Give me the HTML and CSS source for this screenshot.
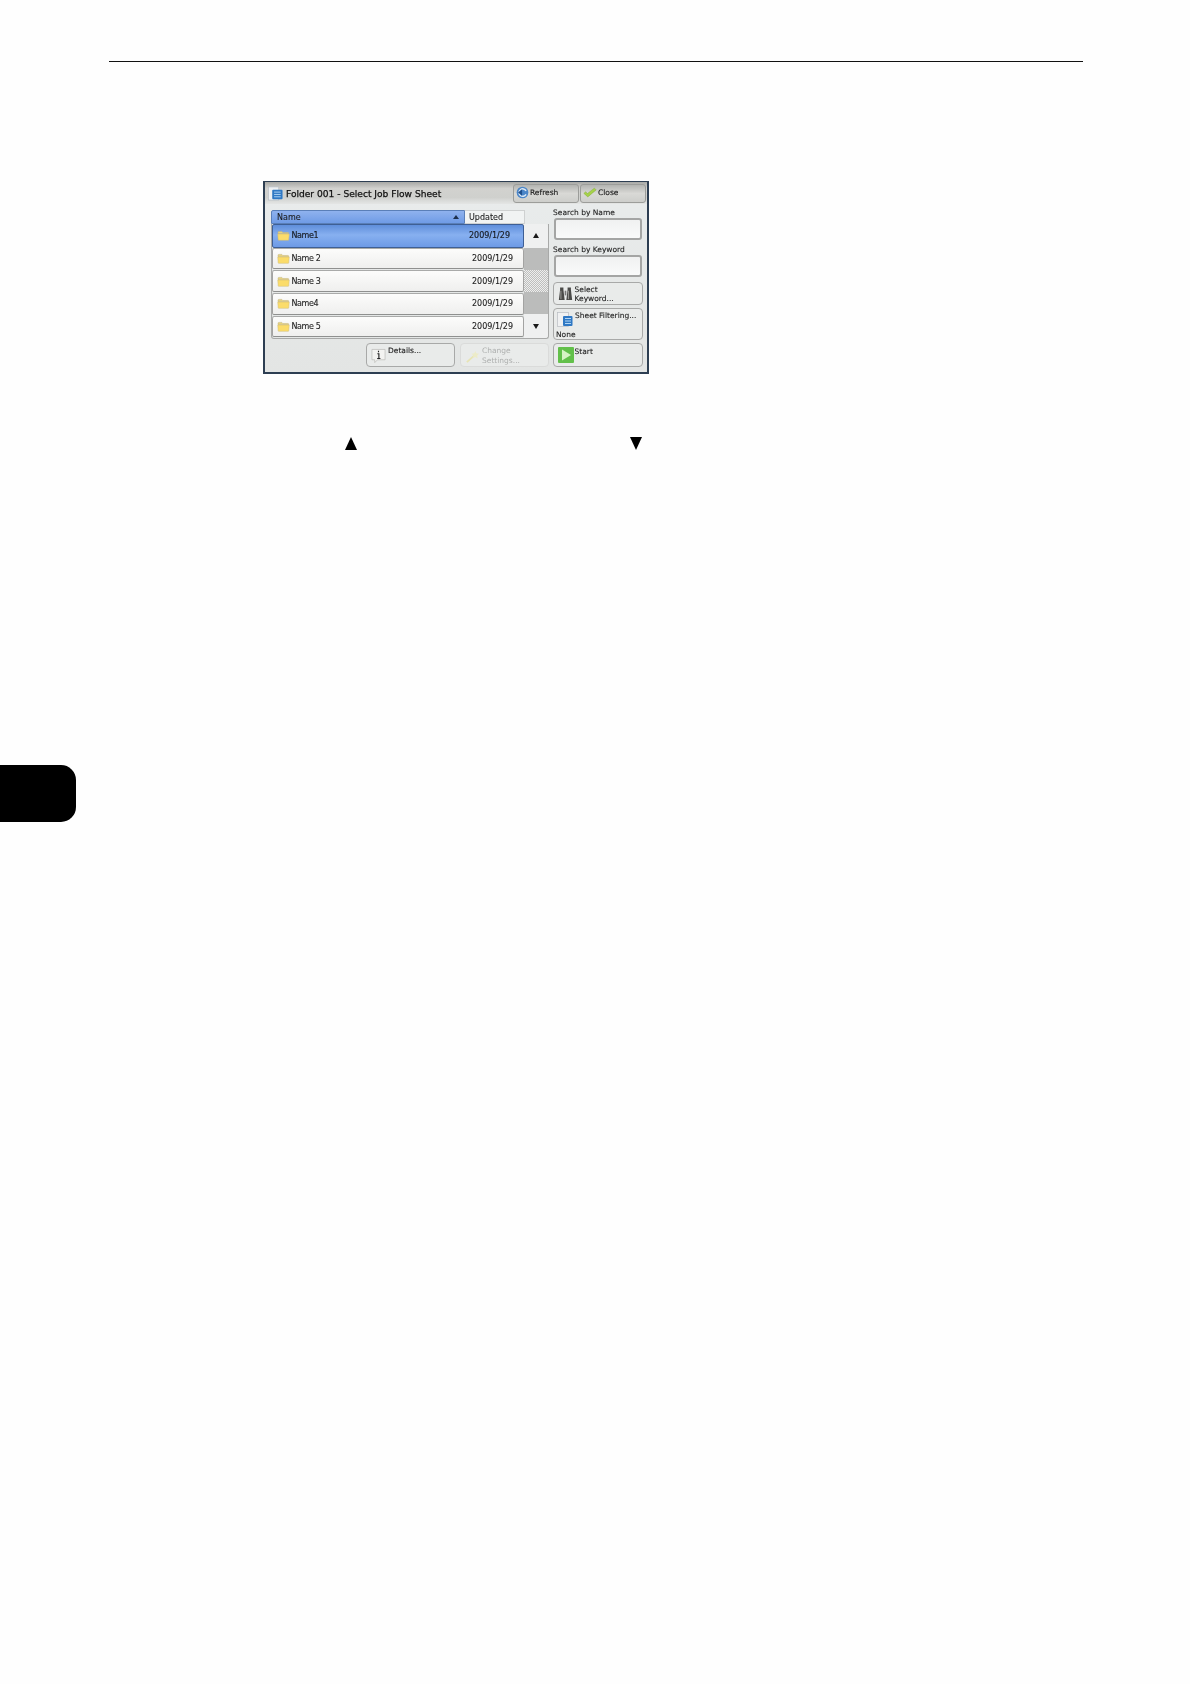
FILE: index.html
```html
<!DOCTYPE html>
<html lang="en">
<head>
<meta charset="utf-8">
<title>Folder 001 - Select Job Flow Sheet</title>
<link rel="stylesheet" href="styles.css">
</head>
<body>
<svg class="defs" width="0" height="0" aria-hidden="true">
  <defs>
    <symbol id="folder" viewBox="0 0 14 12">
      <path d="M1 2.500q0-1 1-1h3.200l1 1.200h5.600q1 0 1 1V4H1z" fill="#e6d27e" stroke="#bfb07a" stroke-width=".5"/>
      <path d="M.7 4.400h12.600l-.6 6.200q0 .7-.8.7H2q-.8 0-.8-.7z" fill="#fbdc6a" stroke="#cdbb7c" stroke-width=".5"/>
    </symbol>
  </defs>
</svg>
<div class="rule"></div>

<section class="panel">
  <header class="titlebar">
    <svg class="title-icon" viewBox="0 0 16 16"><rect x=".5" y="1" width="11" height="14" fill="#eef0f2" stroke="#b5bcc4" stroke-width=".7"/><rect x="4.500" y="4" width="11" height="10" rx="1" fill="#2f78c4"/><path d="M6.500 6.500h7M6.500 9h7M6.500 11.500h7" stroke="#bfe0fa" stroke-width=".9"/></svg>
    <h1 class="title">Folder 001 - Select Job Flow Sheet</h1>
    <button class="bar-btn refresh"><svg viewBox="0 0 14 14"><circle cx="7" cy="7" r="6.300" fill="#4b86c8"/><path d="M10.800 5.200A4 4 0 1 0 10.800 9" fill="none" stroke="#dbe8f4" stroke-width="1.600"/><path d="M2.200 7 6.500 3.600v6.800z" fill="#1d4f8e"/></svg><span>Refresh</span></button>
    <button class="bar-btn close"><svg viewBox="0 0 16 12"><path d="M1 7l2-2 2 2.200L13 1l2 2-9.500 8z" fill="#a6d24a" stroke="#7ea833" stroke-width=".5"/></svg><span>Close</span></button>
  </header>

  <div class="main">
    <div class="left">
      <div class="heads">
        <div class="head-name"><span>Name</span><i class="sort"></i></div>
        <div class="head-upd">Updated</div>
      </div>
      <div class="list-wrap">
        <ul class="rows">
          <li class="row selected"><svg class="folder"><use href="#folder"/></svg><span class="nm">Name1</span><span class="dt">2009/1/29</span></li>
          <li class="row"><svg class="folder"><use href="#folder"/></svg><span class="nm">Name 2</span><span class="dt">2009/1/29</span></li>
          <li class="row"><svg class="folder"><use href="#folder"/></svg><span class="nm">Name 3</span><span class="dt">2009/1/29</span></li>
          <li class="row"><svg class="folder"><use href="#folder"/></svg><span class="nm">Name4</span><span class="dt">2009/1/29</span></li>
          <li class="row"><svg class="folder"><use href="#folder"/></svg><span class="nm">Name 5</span><span class="dt">2009/1/29</span></li>
        </ul>
        <div class="scroll">
          <div class="arrow"><i class="tri up"></i></div>
          <div class="track"></div>
          <div class="thumb"></div>
          <div class="track"></div>
          <div class="arrow"><i class="tri down"></i></div>
        </div>
      </div>
      <div class="bottom">
        <button class="btn details"><svg class="ic-info" viewBox="0 0 16 16"><path d="M1 1h14v11H7l-3 3v-3H1z" fill="#f3f3f1" stroke="#b5b5b2" stroke-width=".7"/><path d="M8 2.500v1.600M6.800 5.600H8.400v4.600M6.600 10.600h3.400" stroke="#222" stroke-width="1.200" fill="none"/></svg><span>Details...</span></button>
        <button class="btn disabled"><svg class="ic-wand" viewBox="0 0 16 16"><path d="M2 14 11 6" stroke="#e7e4b4" stroke-width="2"/><path d="M11 2l1 2.500 3 .5-2 2 .5 3-2.500-1.500L8 9.500 9 7 7 5l3-.5z" fill="#ecebc8"/></svg><span>Change<br>Settings...</span></button>
      </div>
    </div>

    <aside class="right">
      <label class="lbl">Search by Name</label>
      <div class="field"></div>
      <label class="lbl second">Search by Keyword</label>
      <div class="field"></div>
      <button class="btn keyword"><svg class="ic-bino" viewBox="0 0 18 16" preserveAspectRatio="none"><path d="M1 15 2.500 4V1.500h4V4L8 15zM10 15l1.500-11V1.500h4V4L17 15z" fill="#4a4a48"/><path d="M8 5h2v5H8z" fill="#777"/><path d="M3.500 5v9M12.500 5v9" stroke="#a5a5a2"/></svg><span>Select<br>Keyword...</span></button>
      <button class="btn filter"><span class="filter-top"><svg class="ic-sheet" viewBox="0 0 16 16"><rect x=".5" y=".5" width="11" height="14" fill="#f0f1f2" stroke="#b9bdc2" stroke-width=".7"/><rect x="6" y="4" width="9.500" height="10" rx="1" fill="#2f78c4"/><path d="M8 6.500h6M8 9h6M8 11.500h6" stroke="#bfe0fa" stroke-width=".9"/></svg><span class="filter-name">Sheet Filtering...</span></span><span class="none">None</span></button>
      <button class="btn start"><svg class="ic-start" viewBox="0 0 16 16"><rect width="16" height="16" rx="1" fill="#62c04a"/><path d="M4 2.500 13 8l-9 5.500z" fill="#d6f3c4"/></svg><span>Start</span></button>
    </aside>
  </div>
</section>

<div class="markers">
  <i class="marker up"></i>
  <i class="marker down"></i>
</div>

<div class="tab"></div>
</body>
</html>
```

FILE: styles.css
```css
* { box-sizing: border-box; }
html, body { margin: 0; padding: 0; }
body {
  width: 1190px;
  height: 1684px;
  background: #fefefe;
  overflow: hidden;
  font-family: "DejaVu Sans", "Liberation Sans", sans-serif;
  color: #1c1c1c;
}
.defs { position: absolute; }

.rule { height: 1px; margin: 61px 107px 0 109px; background: #111; }

/* panel */
.panel {
  width: 386px;
  height: 193px;
  margin: 119px 0 0 263px;
  border: 2px solid #2d3e52;
  border-top-width: 1px;
  background: linear-gradient(#e9ecec, #e3e5e4);
  filter: blur(.35px);
}
.titlebar {
  display: flex;
  align-items: center;
  height: 22px;
  padding: 0 1px 0 3px;
  background: linear-gradient(#a7a8a5, #d2d2cf 30%, #cfd0cd 70%, #e4e6e5);
}
.title-icon { width: 15px; height: 15px; flex: none; margin-top: 1px; }
.title {
  flex: 1;
  margin: 1px 0 0 3px;
  font-size: 9.100px;
  font-weight: normal;
  -webkit-text-stroke: .25px #111;
  color: #111;
  white-space: nowrap;
}
.bar-btn {
  display: flex;
  align-items: center;
  height: 19px;
  padding: 0 0 1px 2px;
  border: 1px solid #9c9d9a;
  border-radius: 3px;
  background: linear-gradient(#b3b4b1, #d9d9d6 50%, #cdcecb);
  font: 7.500px "DejaVu Sans", sans-serif;
  -webkit-text-stroke: .15px #222;
  color: #222;
}
.bar-btn svg { width: 13px; height: 13px; flex: none; margin-right: 1px; }
.refresh { width: 66px; margin-right: 1px; }
.close { width: 66px; }
.close svg { width: 14px; }

.main { display: flex; padding: 6px 0 0 6px; }

/* list */
.left { width: 278px; }
.heads { display: flex; width: 254px; height: 13.500px; font-size: 8px; -webkit-text-stroke: .1px #1c1c1c; }
.head-name {
  display: flex;
  align-items: center;
  justify-content: space-between;
  width: 194px;
  padding: 1px 5px 0;
  border: 1px solid #5a7fb8;
  border-radius: 2px 0 0 0;
  background: linear-gradient(#8fb2ee, #6f9be6);
}
.sort { width: 0; height: 0; border: 3.500px solid transparent; border-top: 0; border-bottom: 4px solid #1d2f4c; }
.head-upd {
  flex: 1;
  padding: 2px 0 0 4px;
  border: 1px solid #cfd1d1;
  border-left: 0;
  background: #f1f3f3;
}
.list-wrap {
  display: flex;
  height: 115.500px;
  border: 1px solid #a8a9a8;
  border-top: 0;
  border-radius: 0 0 3px 3px;
}
.rows { flex: 1; margin: 0; padding: 0; list-style: none; display: flex; flex-direction: column; gap: 2px; }
.row {
  display: flex;
  align-items: center;
  height: 20.700px;
  padding-left: 4px;
  background: linear-gradient(#fcfcfb, #efefee);
  border-bottom: 1px solid #8f908f;
  border-left: 1px solid #a3a3a2;
  border-right: 1px solid #a3a3a2;
  border-radius: 2px;
  font-size: 8px;
  -webkit-text-stroke: .1px #1c1c1c;
  box-shadow: 0 -1px 0 #a9aaa9;
}
.selected {
  height: 24px;
  margin-bottom: -1px;
  background: linear-gradient(#5f8edb, #87b0f0 45%, #6d9ae6);
  border: 1px solid #3e5f95;
  box-shadow: none;
  -webkit-text-stroke: .2px #14233c;
}
.folder { width: 13px; height: 11px; flex: none; }
.nm { margin-left: 1.500px; letter-spacing: -.4px; }
.dt { margin-left: auto; padding-right: 10px; }
.selected .dt { padding-right: 13px; }

.scroll { width: 24px; display: flex; flex-direction: column; flex: none; }
.arrow { display: flex; align-items: center; justify-content: center; height: 24px; background: #eff0f0; border-radius: 0 3px 0 0; }
.scroll .arrow:last-child { border-radius: 0 0 3px 0; }
.track { flex: 1; background: #bbbcbb; }
.thumb {
  flex: 1;
  background: repeating-conic-gradient(#bdbebd 0 25%, #eeeeed 0 50%) 0 0 / 2px 2px;
}
.tri { width: 0; height: 0; border-left: 3px solid transparent; border-right: 3px solid transparent; }
.tri.up { border-bottom: 5px solid #1a1a1a; }
.tri.down { border-top: 5px solid #1a1a1a; }

.bottom { display: flex; justify-content: flex-end; gap: 5px; margin-top: 4px; }

/* buttons */
.btn {
  display: flex;
  align-items: flex-start;
  padding: 0;
  border: 1px solid #a8a9a8;
  border-radius: 4px;
  background: #e9ebea;
  font: 7.500px/9.500px "DejaVu Sans", sans-serif;
  -webkit-text-stroke: .1px #1c1c1c;
  color: #1c1c1c;
  text-align: left;
}
.bottom .btn { height: 24px; padding: 2px 0 0 4px; }
.details { width: 89px; }
.disabled { width: 89px; }
.ic-info { width: 15px; height: 16px; margin: 2px 2px 0 0; flex: none; }
.bottom .disabled { color: #aeb0af; border-color: #dadbda; -webkit-text-stroke: 0; }
.ic-wand { width: 15px; height: 15px; margin: 3px 2px 0 0; flex: none; }

/* right column */
.right { width: 90px; margin: -2.500px 0 0 4px; display: flex; flex-direction: column; }
.lbl { font-size: 7.500px; line-height: 10px; height: 9.500px; -webkit-text-stroke: .1px #222; }
.second { margin-top: 5px; }
.field {
  height: 21.500px;
  margin: 1px 1px 0;
  border: 2px solid #a4a5a4;
  border-radius: 3px;
  background: linear-gradient(#f0f1f1, #f9fafa);
}
.keyword { height: 23px; margin-top: 5px; padding: 2px 0 0 3.500px; }
.ic-bino { width: 15px; height: 15px; margin: 1px 2px 0 0; flex: none; }
.filter { display: block; height: 32.500px; margin-top: 3px; padding: 2px 0 0 2px; }
.filter-top { display: flex; height: 19px; }
.filter-name { white-space: nowrap; }
.ic-sheet { width: 16px; height: 16px; margin: 1px 2px 0 1px; flex: none; }
.none { display: block; }
.start { height: 24px; margin-top: 3px; padding: 2.500px 0 0 3.500px; }
.ic-start { width: 16px; height: 16px; margin: .5px 1px 0 0; flex: none; }

/* markers below the panel */
.markers { display: flex; margin: 63px 0 0 345px; gap: 272.500px; height: 13px; }
.marker { width: 0; height: 0; border-left: 6.500px solid transparent; border-right: 6.500px solid transparent; }
.marker.up { border-bottom: 13px solid #000; }
.marker.down { border-top: 13px solid #000; }

/* chapter tab */
.tab {
  width: 76px;
  height: 57.500px;
  margin-top: 314.500px;
  background: #000;
  border-radius: 0 15px 15px 0;
}
```
